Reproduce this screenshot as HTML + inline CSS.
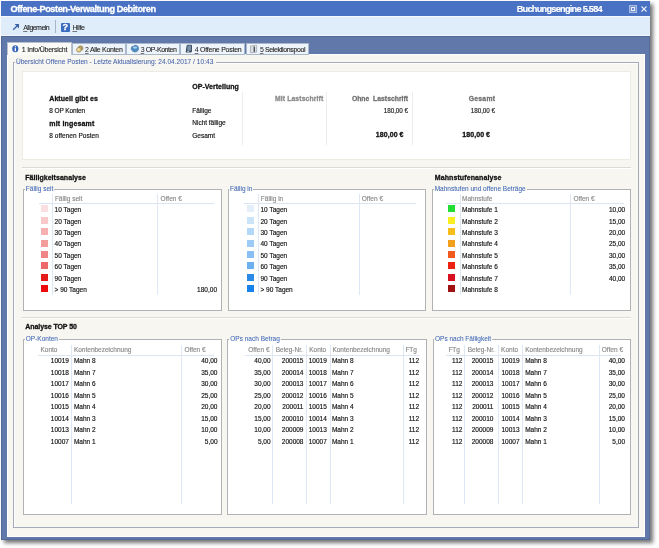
<!DOCTYPE html>
<html><head><meta charset="utf-8"><style>
html,body{margin:0;padding:0;background:#fff;width:659px;height:548px;overflow:hidden;position:relative}
.w{position:absolute;left:0;top:0;width:659px;height:548px;will-change:transform;background:#fff}
.w>div,.w>svg{position:absolute}
.t{position:absolute;white-space:nowrap;font-family:"Liberation Sans",sans-serif;-webkit-text-stroke:0.15px currentColor}
u{text-decoration:underline;text-underline-offset:0.5px;text-decoration-color:#777;-webkit-text-stroke:0}
</style></head><body><div class="w">
<div style="left:1px;top:1px;width:649px;height:539px;background:#6179ab;box-shadow:3px 3px 4px rgba(0,0,0,0.55)"></div>
<div style="left:1px;top:36px;width:649px;height:504px;background:#6079aa;border:1px solid #52699a;box-sizing:border-box"></div>
<div style="left:1px;top:1px;width:649px;height:15px;background:#4a72c4"></div>
<div class="t" style="top:4.199999999999999px;font-size:9.2px;line-height:10px;color:#fff;font-weight:bold;letter-spacing:-0.448px;left:10.5px;-webkit-text-stroke:0.3px currentColor">Offene-Posten-Verwaltung Debitoren</div>
<div class="t" style="top:4.199999999999999px;font-size:9.2px;line-height:10px;color:#fff;font-weight:bold;letter-spacing:-0.736px;right:57px;-webkit-text-stroke:0.3px currentColormargin-right:0.736px;">Buchungsengine 5.584</div>
<div style="left:628.5px;top:4.5px;width:8px;height:8px;border:1px solid #a8bce4;box-sizing:border-box;background:#7896d4"></div>
<div style="left:630.5px;top:6.5px;width:4px;height:4px;border:1px solid #e8eef8;box-sizing:border-box;background:#6a8ed0"></div>
<svg style="position:absolute;left:640.5px;top:6px" width="6" height="6" viewBox="0 0 6 6"><path d="M0.5 0.5L5.5 5.5M5.5 0.5L0.5 5.5" stroke="#e8eefa" stroke-width="1.1"/></svg>
<div style="left:1px;top:16px;width:649px;height:20px;background:#dfecfa;border-top:1px solid #f4f9ff;border-bottom:1px solid #f0f6fd;box-sizing:border-box"></div>
<svg style="position:absolute;left:12px;top:23px" width="8" height="8" viewBox="0 0 8 8"><path d="M1.2 6.8L5.5 2.5" stroke="#3d64a8" stroke-width="1.4" fill="none"/><path d="M2.6 1H7V5.4Z" fill="#3d64a8"/></svg>
<div class="t" style="top:22.6px;font-size:7px;line-height:10px;color:#222;letter-spacing:-0.531px;left:23.2px;-webkit-text-stroke:0.1px currentColor"><u>A</u>llgemein</div>
<div style="left:55px;top:20px;width:1px;height:13px;background:#a8b4c8"></div>
<div style="left:61px;top:22.5px;width:9px;height:9px;background:#3a6cc0;border-radius:1px"></div>
<div class="t" style="top:22.2px;font-size:9px;line-height:10px;color:#fff;font-weight:bold;left:62.6px;-webkit-text-stroke:0.28px currentColor;">?</div>
<div class="t" style="top:22.6px;font-size:7px;line-height:10px;color:#222;letter-spacing:-0.354px;left:72.4px;-webkit-text-stroke:0.1px currentColor"><u>H</u>ilfe</div>
<div style="left:7px;top:54px;width:638px;height:483px;background:#f7f6f1;border:1px solid #fff;box-sizing:border-box"></div>
<div style="left:71.5px;top:43px;width:54.5px;height:12px;background:#eef4fb;border:1px solid #aab8cc;box-sizing:border-box"></div>
<div class="t" style="top:44.6px;font-size:7px;line-height:10px;color:#222;letter-spacing:-0.29px;left:85px;-webkit-text-stroke:0.1px currentColor"><u>2</u> Alle Konten</div>
<div style="left:126px;top:43px;width:54px;height:12px;background:#eef4fb;border:1px solid #aab8cc;box-sizing:border-box"></div>
<div class="t" style="top:44.6px;font-size:7px;line-height:10px;color:#222;letter-spacing:-0.418px;left:140.7px;-webkit-text-stroke:0.1px currentColor"><u>3</u> OP-Konten</div>
<div style="left:180.2px;top:43px;width:65.0px;height:12px;background:#eef4fb;border:1px solid #aab8cc;box-sizing:border-box"></div>
<div class="t" style="top:44.6px;font-size:7px;line-height:10px;color:#222;letter-spacing:-0.242px;left:194.7px;-webkit-text-stroke:0.1px currentColor"><u>4</u> Offene Posten</div>
<div style="left:245.5px;top:43px;width:63.19999999999999px;height:12px;background:#eef4fb;border:1px solid #aab8cc;box-sizing:border-box"></div>
<div class="t" style="top:44.6px;font-size:7px;line-height:10px;color:#222;letter-spacing:-0.386px;left:259.9px;-webkit-text-stroke:0.1px currentColor"><u>5</u> Selektionspool</div>
<div style="left:6.5px;top:42px;width:65px;height:13px;background:#fafaf7;border:1px solid #b8c0cc;border-bottom:none;box-sizing:border-box"></div>
<svg style="position:absolute;left:12px;top:44.6px" width="7" height="8" viewBox="0 0 7 8"><ellipse cx="3.3" cy="3.8" rx="3.1" ry="3.5" fill="#3566b8"/><rect x="2.7" y="3.1" width="1.3" height="3.1" fill="#fff"/><rect x="2.7" y="1.3" width="1.3" height="1.1" fill="#fff"/></svg>
<div class="t" style="top:44.6px;font-size:7px;line-height:10px;color:#222;letter-spacing:-0.229px;left:21.8px;-webkit-text-stroke:0.1px currentColor">1 Info/Übersicht</div>
<svg style="position:absolute;left:75px;top:44px" width="10" height="10" viewBox="0 0 10 10"><circle cx="5.6" cy="4.2" r="2.4" fill="#b8a468" stroke="#8c7c4c" stroke-width="0.6"/><circle cx="3.9" cy="5.8" r="2.4" fill="#dcc47c" stroke="#8c7c4c" stroke-width="0.6"/><circle cx="3.6" cy="5.5" r="1.2" fill="#f0e0a8"/></svg>
<svg style="position:absolute;left:130px;top:44px" width="10" height="10" viewBox="0 0 10 10"><path d="M1.2 4 Q1.5 2 3.5 2.2 Q4.5 0.8 6.5 1.5 Q8.6 2 8.5 4.2 Q8.8 6.8 6.8 7.6 Q4.5 8.6 2.8 7.2 Q0.8 6 1.2 4Z" fill="#4e8cc4" stroke="#386894" stroke-width="0.6"/><ellipse cx="5" cy="3.6" rx="2.2" ry="1.1" fill="#a6d0f0"/></svg>
<svg style="position:absolute;left:184.5px;top:44px" width="8" height="10" viewBox="0 0 8 10"><path d="M1.6 1.6 Q2 0.8 3 0.8 L6.2 0.8 Q7 0.8 7 1.8 L7 7.6 L6 8.6 L1.2 8.6 Q0.6 8.6 0.8 7.6Z" fill="#3a4858"/><path d="M2.4 1.6 L6.1 1.6 L6.1 6.8 L2.2 6.8Z" fill="#7890aa"/><rect x="2.2" y="7.2" width="2" height="0.9" fill="#d8e0e8"/></svg>
<svg style="position:absolute;left:249px;top:44px" width="9" height="10" viewBox="0 0 9 10"><path d="M1.4 2 L7.6 1.2 L7.6 8.2 L1.4 8.8Z" fill="#dcdfe2" stroke="#9aa0a6" stroke-width="0.7"/><path d="M4.6 2.6 L6 2.4 L6 7.8 L4.6 8Z" fill="#4a525a"/><rect x="6.3" y="1.6" width="1" height="1" fill="#fff"/></svg>
<div style="left:13px;top:62px;width:626px;height:1px;background:#a6abbb"></div>
<div style="left:14px;top:63px;width:624px;height:1px;background:#fff"></div>
<div style="left:13px;top:62px;width:1px;height:466px;background:#a6abbb"></div>
<div style="left:14px;top:63px;width:1px;height:464px;background:#fff"></div>
<div style="left:638px;top:62px;width:1px;height:466px;background:#a6abbb"></div>
<div style="left:13px;top:527px;width:626px;height:1px;background:#a6abbb"></div>
<div style="left:14.5px;top:57px;width:201px;height:8px;background:#f7f6f1"></div>
<div class="t" style="top:56.5px;font-size:6.6px;line-height:10px;color:#4664ac;letter-spacing:0.005px;left:15.9px;-webkit-text-stroke:0.05px currentColor">Übersicht Offene Posten - Letzte Aktualisierung: 24.04.2017 / 10:43</div>
<div style="left:22px;top:71px;width:609px;height:89px;background:#fff;border:1px solid #ecebe4;box-sizing:border-box"></div>
<div class="t" style="top:81.6px;font-size:7px;line-height:10px;color:#111;font-weight:bold;letter-spacing:0.017px;left:192.3px;-webkit-text-stroke:0.28px currentColor;">OP-Verteilung</div>
<div class="t" style="top:93.8px;font-size:7px;line-height:10px;color:#111;font-weight:bold;letter-spacing:0.054px;left:49.3px;-webkit-text-stroke:0.28px currentColor;">Aktuell gibt es</div>
<div class="t" style="top:106.0px;font-size:6.5px;line-height:10px;color:#111;letter-spacing:-0.121px;left:49.3px;">8 OP Konten</div>
<div class="t" style="top:118.5px;font-size:7px;line-height:10px;color:#111;font-weight:bold;letter-spacing:0.165px;left:49.3px;-webkit-text-stroke:0.28px currentColor;">mit ingesamt</div>
<div class="t" style="top:130.8px;font-size:6.5px;line-height:10px;color:#111;letter-spacing:0.037px;left:49.3px;">8 offenen Posten</div>
<div class="t" style="top:106.0px;font-size:6.5px;line-height:10px;color:#111;letter-spacing:0.007px;left:192.3px;">Fällige</div>
<div class="t" style="top:117.8px;font-size:6.5px;line-height:10px;color:#111;letter-spacing:-0.017px;left:192.3px;">Nicht fällige</div>
<div class="t" style="top:130.8px;font-size:6.5px;line-height:10px;color:#111;letter-spacing:-0.013px;left:192.3px;">Gesamt</div>
<div style="left:242px;top:92px;width:1px;height:53px;background:#ececec"></div>
<div style="left:326px;top:92px;width:1px;height:53px;background:#ececec"></div>
<div style="left:412px;top:92px;width:1px;height:53px;background:#ececec"></div>
<div class="t" style="top:93.6px;font-size:6.8px;line-height:10px;color:#8a8a8a;font-weight:bold;letter-spacing:0.139px;right:335.7px;margin-right:-0.139px;-webkit-text-stroke:0.28px currentColor;">Mit Lastschrift</div>
<div class="t" style="top:93.6px;font-size:6.8px;line-height:10px;color:#707070;font-weight:bold;letter-spacing:0.012px;right:251px;margin-right:-0.012px;-webkit-text-stroke:0.28px currentColor;">Ohne&nbsp; Lastschrift</div>
<div class="t" style="top:93.6px;font-size:6.8px;line-height:10px;color:#707070;font-weight:bold;letter-spacing:0.273px;right:164px;margin-right:-0.273px;-webkit-text-stroke:0.28px currentColor;">Gesamt</div>
<div class="t" style="top:105.6px;font-size:6.3px;line-height:10px;color:#222;letter-spacing:-0.031px;right:251px;margin-right:0.031px;">180,00 €</div>
<div class="t" style="top:105.6px;font-size:6.3px;line-height:10px;color:#222;letter-spacing:-0.031px;right:164px;margin-right:0.031px;">180,00 €</div>
<div class="t" style="top:130.0px;font-size:7px;line-height:10px;color:#111;font-weight:bold;letter-spacing:0.064px;right:255.5px;margin-right:-0.064px;-webkit-text-stroke:0.28px currentColor;">180,00 €</div>
<div class="t" style="top:130.0px;font-size:7px;line-height:10px;color:#111;font-weight:bold;letter-spacing:0.064px;right:169px;margin-right:-0.064px;-webkit-text-stroke:0.28px currentColor;">180,00 €</div>
<div style="left:22px;top:167px;width:609px;height:1px;background:#dcdad2"></div>
<div style="left:22px;top:168px;width:609px;height:1px;background:#fff"></div>
<div class="t" style="top:172.5px;font-size:7px;line-height:10px;color:#111;font-weight:bold;letter-spacing:0.046px;left:25.2px;-webkit-text-stroke:0.28px currentColor;">Fälligkeitsanalyse</div>
<div class="t" style="top:172.5px;font-size:7px;line-height:10px;color:#111;font-weight:bold;letter-spacing:0.114px;left:434.7px;-webkit-text-stroke:0.28px currentColor;">Mahnstufenanalyse</div>
<div style="left:22px;top:317px;width:609px;height:1px;background:#dcdad2"></div>
<div style="left:22px;top:318px;width:609px;height:1px;background:#fff"></div>
<div class="t" style="top:322.0px;font-size:7px;line-height:10px;color:#111;font-weight:bold;letter-spacing:-0.082px;left:25.3px;-webkit-text-stroke:0.28px currentColor;">Analyse TOP 50</div>
<div style="left:23px;top:189px;width:199px;height:122px;background:#fff;border:1px solid #b0b2b4;box-sizing:border-box"></div>
<div class="t" style="left:24.8px;top:183.5px;line-height:10px;font-size:6.5px;color:#4068b8;-webkit-text-stroke:0.05px currentColor;padding:0 1px;background:linear-gradient(#f7f6f1 0,#f7f6f1 6.5px,transparent 6.5px)">Fällig seit</div>
<div style="left:228px;top:189px;width:198px;height:122px;background:#fff;border:1px solid #b0b2b4;box-sizing:border-box"></div>
<div class="t" style="left:229px;top:183.5px;line-height:10px;font-size:6.5px;color:#4068b8;-webkit-text-stroke:0.05px currentColor;padding:0 1px;background:linear-gradient(#f7f6f1 0,#f7f6f1 6.5px,transparent 6.5px)">Fällig in</div>
<div style="left:432px;top:189px;width:199px;height:122px;background:#fff;border:1px solid #b0b2b4;box-sizing:border-box"></div>
<div class="t" style="left:433.7px;top:183.5px;line-height:10px;font-size:6.5px;color:#4068b8;-webkit-text-stroke:0.05px currentColor;padding:0 1px;background:linear-gradient(#f7f6f1 0,#f7f6f1 6.5px,transparent 6.5px)">Mahnstufen und offene Beträge</div>
<div style="left:40.5px;top:205.29999999999998px;width:7px;height:7px;background:#fbdfe0"></div>
<div style="left:246.5px;top:205.29999999999998px;width:7px;height:7px;background:#e4eefb"></div>
<div style="left:448.3px;top:205.29999999999998px;width:7px;height:7px;background:#22dd33"></div>
<div style="left:40.5px;top:216.7px;width:7px;height:7px;background:#f9c8c9"></div>
<div style="left:246.5px;top:216.7px;width:7px;height:7px;background:#cce4fa"></div>
<div style="left:448.3px;top:216.7px;width:7px;height:7px;background:#f8ee20"></div>
<div style="left:40.5px;top:228.1px;width:7px;height:7px;background:#f6b0b1"></div>
<div style="left:246.5px;top:228.1px;width:7px;height:7px;background:#b4d8fa"></div>
<div style="left:448.3px;top:228.1px;width:7px;height:7px;background:#f5be1a"></div>
<div style="left:40.5px;top:239.5px;width:7px;height:7px;background:#f39c9c"></div>
<div style="left:246.5px;top:239.5px;width:7px;height:7px;background:#9ecbf6"></div>
<div style="left:448.3px;top:239.5px;width:7px;height:7px;background:#f1a01c"></div>
<div style="left:40.5px;top:250.89999999999998px;width:7px;height:7px;background:#f08585"></div>
<div style="left:246.5px;top:250.89999999999998px;width:7px;height:7px;background:#88bff4"></div>
<div style="left:448.3px;top:250.89999999999998px;width:7px;height:7px;background:#f05a1c"></div>
<div style="left:40.5px;top:262.3px;width:7px;height:7px;background:#ec6a6a"></div>
<div style="left:246.5px;top:262.3px;width:7px;height:7px;background:#6cb0f0"></div>
<div style="left:448.3px;top:262.3px;width:7px;height:7px;background:#ee2212"></div>
<div style="left:40.5px;top:273.7px;width:7px;height:7px;background:#e51a1a"></div>
<div style="left:246.5px;top:273.7px;width:7px;height:7px;background:#2a8ae6"></div>
<div style="left:448.3px;top:273.7px;width:7px;height:7px;background:#d80f1f"></div>
<div style="left:40.5px;top:285.09999999999997px;width:7px;height:7px;background:#ee0a0a"></div>
<div style="left:246.5px;top:285.09999999999997px;width:7px;height:7px;background:#1682ec"></div>
<div style="left:448.3px;top:285.09999999999997px;width:7px;height:7px;background:#a01212"></div>
<div style="left:39px;top:203px;width:175px;height:1px;background:#dbe4f4"></div>
<div style="left:52px;top:193.5px;width:1px;height:101.89999999999998px;background:#dfe7f5"></div>
<div class="t" style="top:193.5px;font-size:6.5px;line-height:10px;color:#8a8a8a;left:54.9px;">Fällig seit</div>
<div style="left:157px;top:193.5px;width:1px;height:101.89999999999998px;background:#dfe7f5"></div>
<div class="t" style="top:193.5px;font-size:6.5px;line-height:10px;color:#8a8a8a;left:160.6px;">Offen €</div>
<div class="t" style="top:205.1px;font-size:6.5px;line-height:10px;color:#111;left:54.6px;">10 Tagen</div>
<div class="t" style="top:216.5px;font-size:6.5px;line-height:10px;color:#111;left:54.6px;">20 Tagen</div>
<div class="t" style="top:227.9px;font-size:6.5px;line-height:10px;color:#111;left:54.6px;">30 Tagen</div>
<div class="t" style="top:239.3px;font-size:6.5px;line-height:10px;color:#111;left:54.6px;">40 Tagen</div>
<div class="t" style="top:250.7px;font-size:6.5px;line-height:10px;color:#111;left:54.6px;">50 Tagen</div>
<div class="t" style="top:262.1px;font-size:6.5px;line-height:10px;color:#111;left:54.6px;">60 Tagen</div>
<div class="t" style="top:273.5px;font-size:6.5px;line-height:10px;color:#111;left:54.6px;">90 Tagen</div>
<div class="t" style="top:284.9px;font-size:6.5px;line-height:10px;color:#111;left:54.6px;">&gt; 90 Tagen</div>
<div class="t" style="top:284.9px;font-size:6.5px;line-height:10px;color:#111;right:442px;">180,00</div>
<div style="left:244px;top:203px;width:172px;height:1px;background:#dbe4f4"></div>
<div style="left:258px;top:193.5px;width:1px;height:101.89999999999998px;background:#dfe7f5"></div>
<div class="t" style="top:193.5px;font-size:6.5px;line-height:10px;color:#8a8a8a;left:260.8px;">Fällig in</div>
<div style="left:359px;top:193.5px;width:1px;height:101.89999999999998px;background:#dfe7f5"></div>
<div class="t" style="top:193.5px;font-size:6.5px;line-height:10px;color:#8a8a8a;left:361.8px;">Offen €</div>
<div class="t" style="top:205.1px;font-size:6.5px;line-height:10px;color:#111;left:260.5px;">10 Tagen</div>
<div class="t" style="top:216.5px;font-size:6.5px;line-height:10px;color:#111;left:260.5px;">20 Tagen</div>
<div class="t" style="top:227.9px;font-size:6.5px;line-height:10px;color:#111;left:260.5px;">30 Tagen</div>
<div class="t" style="top:239.3px;font-size:6.5px;line-height:10px;color:#111;left:260.5px;">40 Tagen</div>
<div class="t" style="top:250.7px;font-size:6.5px;line-height:10px;color:#111;left:260.5px;">50 Tagen</div>
<div class="t" style="top:262.1px;font-size:6.5px;line-height:10px;color:#111;left:260.5px;">60 Tagen</div>
<div class="t" style="top:273.5px;font-size:6.5px;line-height:10px;color:#111;left:260.5px;">90 Tagen</div>
<div class="t" style="top:284.9px;font-size:6.5px;line-height:10px;color:#111;left:260.5px;">&gt; 90 Tagen</div>
<div style="left:446px;top:203px;width:178px;height:1px;background:#dbe4f4"></div>
<div style="left:460px;top:193.5px;width:1px;height:101.89999999999998px;background:#dfe7f5"></div>
<div class="t" style="top:193.5px;font-size:6.5px;line-height:10px;color:#8a8a8a;left:462px;">Mahnstufe</div>
<div style="left:570px;top:193.5px;width:1px;height:101.89999999999998px;background:#dfe7f5"></div>
<div class="t" style="top:193.5px;font-size:6.5px;line-height:10px;color:#8a8a8a;left:573.4px;">Offen €</div>
<div class="t" style="top:205.1px;font-size:6.5px;line-height:10px;color:#111;left:462px;">Mahnstufe 1</div>
<div class="t" style="top:205.1px;font-size:6.5px;line-height:10px;color:#111;right:33.799999999999955px;">10,00</div>
<div class="t" style="top:216.5px;font-size:6.5px;line-height:10px;color:#111;left:462px;">Mahnstufe 2</div>
<div class="t" style="top:216.5px;font-size:6.5px;line-height:10px;color:#111;right:33.799999999999955px;">15,00</div>
<div class="t" style="top:227.9px;font-size:6.5px;line-height:10px;color:#111;left:462px;">Mahnstufe 3</div>
<div class="t" style="top:227.9px;font-size:6.5px;line-height:10px;color:#111;right:33.799999999999955px;">20,00</div>
<div class="t" style="top:239.3px;font-size:6.5px;line-height:10px;color:#111;left:462px;">Mahnstufe 4</div>
<div class="t" style="top:239.3px;font-size:6.5px;line-height:10px;color:#111;right:33.799999999999955px;">25,00</div>
<div class="t" style="top:250.7px;font-size:6.5px;line-height:10px;color:#111;left:462px;">Mahnstufe 5</div>
<div class="t" style="top:250.7px;font-size:6.5px;line-height:10px;color:#111;right:33.799999999999955px;">30,00</div>
<div class="t" style="top:262.1px;font-size:6.5px;line-height:10px;color:#111;left:462px;">Mahnstufe 6</div>
<div class="t" style="top:262.1px;font-size:6.5px;line-height:10px;color:#111;right:33.799999999999955px;">35,00</div>
<div class="t" style="top:273.5px;font-size:6.5px;line-height:10px;color:#111;left:462px;">Mahnstufe 7</div>
<div class="t" style="top:273.5px;font-size:6.5px;line-height:10px;color:#111;right:33.799999999999955px;">40,00</div>
<div class="t" style="top:284.9px;font-size:6.5px;line-height:10px;color:#111;left:462px;">Mahnstufe 8</div>
<div style="left:23px;top:339px;width:199px;height:176px;background:#fff;border:1px solid #b0b2b4;box-sizing:border-box"></div>
<div class="t" style="left:24.8px;top:333.5px;line-height:10px;font-size:6.5px;color:#4068b8;-webkit-text-stroke:0.05px currentColor;padding:0 1px;background:linear-gradient(#f7f6f1 0,#f7f6f1 6.5px,transparent 6.5px)">OP-Konten</div>
<div style="left:227px;top:339px;width:200px;height:176px;background:#fff;border:1px solid #b0b2b4;box-sizing:border-box"></div>
<div class="t" style="left:229.3px;top:333.5px;line-height:10px;font-size:6.5px;color:#4068b8;-webkit-text-stroke:0.05px currentColor;padding:0 1px;background:linear-gradient(#f7f6f1 0,#f7f6f1 6.5px,transparent 6.5px)">OPs nach Betrag</div>
<div style="left:433px;top:339px;width:198px;height:176px;background:#fff;border:1px solid #b0b2b4;box-sizing:border-box"></div>
<div class="t" style="left:434px;top:333.5px;line-height:10px;font-size:6.5px;color:#4068b8;-webkit-text-stroke:0.05px currentColor;padding:0 1px;background:linear-gradient(#f7f6f1 0,#f7f6f1 6.5px,transparent 6.5px)">OPs nach Fälligkeit</div>
<div style="left:38px;top:354.8px;width:176px;height:1px;background:#dbe4f4"></div>
<div class="t" style="top:344.6px;font-size:6.5px;line-height:10px;color:#8a8a8a;left:40.5px;">Konto</div>
<div style="left:71.3px;top:344.6px;width:1px;height:159.09999999999997px;background:#dfe7f5"></div>
<div class="t" style="top:344.6px;font-size:6.5px;line-height:10px;color:#8a8a8a;left:73.9px;">Kontenbezeichnung</div>
<div style="left:181px;top:344.6px;width:1px;height:159.09999999999997px;background:#dfe7f5"></div>
<div class="t" style="top:344.6px;font-size:6.5px;line-height:10px;color:#8a8a8a;left:184.4px;">Offen €</div>
<div class="t" style="top:356.4px;font-size:6.5px;line-height:10px;color:#111;right:590.1px;">10019</div>
<div class="t" style="top:356.4px;font-size:6.5px;line-height:10px;color:#111;left:73.9px;">Mahn 8</div>
<div class="t" style="top:356.4px;font-size:6.5px;line-height:10px;color:#111;right:441.5px;">40,00</div>
<div class="t" style="top:367.87px;font-size:6.5px;line-height:10px;color:#111;right:590.1px;">10018</div>
<div class="t" style="top:367.87px;font-size:6.5px;line-height:10px;color:#111;left:73.9px;">Mahn 7</div>
<div class="t" style="top:367.87px;font-size:6.5px;line-height:10px;color:#111;right:441.5px;">35,00</div>
<div class="t" style="top:379.34px;font-size:6.5px;line-height:10px;color:#111;right:590.1px;">10017</div>
<div class="t" style="top:379.34px;font-size:6.5px;line-height:10px;color:#111;left:73.9px;">Mahn 6</div>
<div class="t" style="top:379.34px;font-size:6.5px;line-height:10px;color:#111;right:441.5px;">30,00</div>
<div class="t" style="top:390.81px;font-size:6.5px;line-height:10px;color:#111;right:590.1px;">10016</div>
<div class="t" style="top:390.81px;font-size:6.5px;line-height:10px;color:#111;left:73.9px;">Mahn 5</div>
<div class="t" style="top:390.81px;font-size:6.5px;line-height:10px;color:#111;right:441.5px;">25,00</div>
<div class="t" style="top:402.28px;font-size:6.5px;line-height:10px;color:#111;right:590.1px;">10015</div>
<div class="t" style="top:402.28px;font-size:6.5px;line-height:10px;color:#111;left:73.9px;">Mahn 4</div>
<div class="t" style="top:402.28px;font-size:6.5px;line-height:10px;color:#111;right:441.5px;">20,00</div>
<div class="t" style="top:413.75px;font-size:6.5px;line-height:10px;color:#111;right:590.1px;">10014</div>
<div class="t" style="top:413.75px;font-size:6.5px;line-height:10px;color:#111;left:73.9px;">Mahn 3</div>
<div class="t" style="top:413.75px;font-size:6.5px;line-height:10px;color:#111;right:441.5px;">15,00</div>
<div class="t" style="top:425.21999999999997px;font-size:6.5px;line-height:10px;color:#111;right:590.1px;">10013</div>
<div class="t" style="top:425.21999999999997px;font-size:6.5px;line-height:10px;color:#111;left:73.9px;">Mahn 2</div>
<div class="t" style="top:425.21999999999997px;font-size:6.5px;line-height:10px;color:#111;right:441.5px;">10,00</div>
<div class="t" style="top:436.69px;font-size:6.5px;line-height:10px;color:#111;right:590.1px;">10007</div>
<div class="t" style="top:436.69px;font-size:6.5px;line-height:10px;color:#111;left:73.9px;">Mahn 1</div>
<div class="t" style="top:436.69px;font-size:6.5px;line-height:10px;color:#111;right:441.5px;">5,00</div>
<div style="left:244.5px;top:354.8px;width:175.5px;height:1px;background:#dbe4f4"></div>
<div class="t" style="top:344.6px;font-size:6.5px;line-height:10px;color:#8a8a8a;right:389.5px;">Offen €</div>
<div style="left:272.1px;top:344.6px;width:1px;height:159.09999999999997px;background:#dfe7f5"></div>
<div class="t" style="top:344.6px;font-size:6.5px;line-height:10px;color:#8a8a8a;left:275.7px;">Beleg-Nr.</div>
<div style="left:306.1px;top:344.6px;width:1px;height:159.09999999999997px;background:#dfe7f5"></div>
<div class="t" style="top:344.6px;font-size:6.5px;line-height:10px;color:#8a8a8a;left:309.2px;">Konto</div>
<div style="left:329.9px;top:344.6px;width:1px;height:159.09999999999997px;background:#dfe7f5"></div>
<div class="t" style="top:344.6px;font-size:6.5px;line-height:10px;color:#8a8a8a;left:332.4px;">Kontenbezeichnung</div>
<div style="left:402.9px;top:344.6px;width:1px;height:159.09999999999997px;background:#dfe7f5"></div>
<div class="t" style="top:344.6px;font-size:6.5px;line-height:10px;color:#8a8a8a;left:405.4px;">FTg</div>
<div class="t" style="top:356.4px;font-size:6.5px;line-height:10px;color:#111;right:388.4px;">40,00</div>
<div class="t" style="top:356.4px;font-size:6.5px;line-height:10px;color:#111;right:355.5px;">200015</div>
<div class="t" style="top:356.4px;font-size:6.5px;line-height:10px;color:#111;right:332.2px;">10019</div>
<div class="t" style="top:356.4px;font-size:6.5px;line-height:10px;color:#111;left:331.9px;">Mahn 8</div>
<div class="t" style="top:356.4px;font-size:6.5px;line-height:10px;color:#111;right:239.89999999999998px;">112</div>
<div class="t" style="top:367.87px;font-size:6.5px;line-height:10px;color:#111;right:388.4px;">35,00</div>
<div class="t" style="top:367.87px;font-size:6.5px;line-height:10px;color:#111;right:355.5px;">200014</div>
<div class="t" style="top:367.87px;font-size:6.5px;line-height:10px;color:#111;right:332.2px;">10018</div>
<div class="t" style="top:367.87px;font-size:6.5px;line-height:10px;color:#111;left:331.9px;">Mahn 7</div>
<div class="t" style="top:367.87px;font-size:6.5px;line-height:10px;color:#111;right:239.89999999999998px;">112</div>
<div class="t" style="top:379.34px;font-size:6.5px;line-height:10px;color:#111;right:388.4px;">30,00</div>
<div class="t" style="top:379.34px;font-size:6.5px;line-height:10px;color:#111;right:355.5px;">200013</div>
<div class="t" style="top:379.34px;font-size:6.5px;line-height:10px;color:#111;right:332.2px;">10017</div>
<div class="t" style="top:379.34px;font-size:6.5px;line-height:10px;color:#111;left:331.9px;">Mahn 6</div>
<div class="t" style="top:379.34px;font-size:6.5px;line-height:10px;color:#111;right:239.89999999999998px;">112</div>
<div class="t" style="top:390.81px;font-size:6.5px;line-height:10px;color:#111;right:388.4px;">25,00</div>
<div class="t" style="top:390.81px;font-size:6.5px;line-height:10px;color:#111;right:355.5px;">200012</div>
<div class="t" style="top:390.81px;font-size:6.5px;line-height:10px;color:#111;right:332.2px;">10016</div>
<div class="t" style="top:390.81px;font-size:6.5px;line-height:10px;color:#111;left:331.9px;">Mahn 5</div>
<div class="t" style="top:390.81px;font-size:6.5px;line-height:10px;color:#111;right:239.89999999999998px;">112</div>
<div class="t" style="top:402.28px;font-size:6.5px;line-height:10px;color:#111;right:388.4px;">20,00</div>
<div class="t" style="top:402.28px;font-size:6.5px;line-height:10px;color:#111;right:355.5px;">200011</div>
<div class="t" style="top:402.28px;font-size:6.5px;line-height:10px;color:#111;right:332.2px;">10015</div>
<div class="t" style="top:402.28px;font-size:6.5px;line-height:10px;color:#111;left:331.9px;">Mahn 4</div>
<div class="t" style="top:402.28px;font-size:6.5px;line-height:10px;color:#111;right:239.89999999999998px;">112</div>
<div class="t" style="top:413.75px;font-size:6.5px;line-height:10px;color:#111;right:388.4px;">15,00</div>
<div class="t" style="top:413.75px;font-size:6.5px;line-height:10px;color:#111;right:355.5px;">200010</div>
<div class="t" style="top:413.75px;font-size:6.5px;line-height:10px;color:#111;right:332.2px;">10014</div>
<div class="t" style="top:413.75px;font-size:6.5px;line-height:10px;color:#111;left:331.9px;">Mahn 3</div>
<div class="t" style="top:413.75px;font-size:6.5px;line-height:10px;color:#111;right:239.89999999999998px;">112</div>
<div class="t" style="top:425.21999999999997px;font-size:6.5px;line-height:10px;color:#111;right:388.4px;">10,00</div>
<div class="t" style="top:425.21999999999997px;font-size:6.5px;line-height:10px;color:#111;right:355.5px;">200009</div>
<div class="t" style="top:425.21999999999997px;font-size:6.5px;line-height:10px;color:#111;right:332.2px;">10013</div>
<div class="t" style="top:425.21999999999997px;font-size:6.5px;line-height:10px;color:#111;left:331.9px;">Mahn 2</div>
<div class="t" style="top:425.21999999999997px;font-size:6.5px;line-height:10px;color:#111;right:239.89999999999998px;">112</div>
<div class="t" style="top:436.69px;font-size:6.5px;line-height:10px;color:#111;right:388.4px;">5,00</div>
<div class="t" style="top:436.69px;font-size:6.5px;line-height:10px;color:#111;right:355.5px;">200008</div>
<div class="t" style="top:436.69px;font-size:6.5px;line-height:10px;color:#111;right:332.2px;">10007</div>
<div class="t" style="top:436.69px;font-size:6.5px;line-height:10px;color:#111;left:331.9px;">Mahn 1</div>
<div class="t" style="top:436.69px;font-size:6.5px;line-height:10px;color:#111;right:239.89999999999998px;">112</div>
<div style="left:446px;top:354.6px;width:175.39999999999998px;height:1px;background:#dbe4f4"></div>
<div class="t" style="top:344.6px;font-size:6.5px;line-height:10px;color:#8a8a8a;left:448.4px;">FTg</div>
<div style="left:464.4px;top:344.6px;width:1px;height:159.09999999999997px;background:#dfe7f5"></div>
<div class="t" style="top:344.6px;font-size:6.5px;line-height:10px;color:#8a8a8a;left:467.7px;">Beleg-Nr.</div>
<div style="left:498.4px;top:344.6px;width:1px;height:159.09999999999997px;background:#dfe7f5"></div>
<div class="t" style="top:344.6px;font-size:6.5px;line-height:10px;color:#8a8a8a;left:501.1px;">Konto</div>
<div style="left:521.8px;top:344.6px;width:1px;height:159.09999999999997px;background:#dfe7f5"></div>
<div class="t" style="top:344.6px;font-size:6.5px;line-height:10px;color:#8a8a8a;left:525.2px;">Kontenbezeichnung</div>
<div style="left:599.1px;top:344.6px;width:1px;height:159.09999999999997px;background:#dfe7f5"></div>
<div class="t" style="top:344.6px;font-size:6.5px;line-height:10px;color:#8a8a8a;left:601.8px;">Offen €</div>
<div class="t" style="top:356.4px;font-size:6.5px;line-height:10px;color:#111;right:196.60000000000002px;">112</div>
<div class="t" style="top:356.4px;font-size:6.5px;line-height:10px;color:#111;right:165.60000000000002px;">200015</div>
<div class="t" style="top:356.4px;font-size:6.5px;line-height:10px;color:#111;right:139.5px;">10019</div>
<div class="t" style="top:356.4px;font-size:6.5px;line-height:10px;color:#111;left:525.2px;">Mahn 8</div>
<div class="t" style="top:356.4px;font-size:6.5px;line-height:10px;color:#111;right:34px;">40,00</div>
<div class="t" style="top:367.87px;font-size:6.5px;line-height:10px;color:#111;right:196.60000000000002px;">112</div>
<div class="t" style="top:367.87px;font-size:6.5px;line-height:10px;color:#111;right:165.60000000000002px;">200014</div>
<div class="t" style="top:367.87px;font-size:6.5px;line-height:10px;color:#111;right:139.5px;">10018</div>
<div class="t" style="top:367.87px;font-size:6.5px;line-height:10px;color:#111;left:525.2px;">Mahn 7</div>
<div class="t" style="top:367.87px;font-size:6.5px;line-height:10px;color:#111;right:34px;">35,00</div>
<div class="t" style="top:379.34px;font-size:6.5px;line-height:10px;color:#111;right:196.60000000000002px;">112</div>
<div class="t" style="top:379.34px;font-size:6.5px;line-height:10px;color:#111;right:165.60000000000002px;">200013</div>
<div class="t" style="top:379.34px;font-size:6.5px;line-height:10px;color:#111;right:139.5px;">10017</div>
<div class="t" style="top:379.34px;font-size:6.5px;line-height:10px;color:#111;left:525.2px;">Mahn 6</div>
<div class="t" style="top:379.34px;font-size:6.5px;line-height:10px;color:#111;right:34px;">30,00</div>
<div class="t" style="top:390.81px;font-size:6.5px;line-height:10px;color:#111;right:196.60000000000002px;">112</div>
<div class="t" style="top:390.81px;font-size:6.5px;line-height:10px;color:#111;right:165.60000000000002px;">200012</div>
<div class="t" style="top:390.81px;font-size:6.5px;line-height:10px;color:#111;right:139.5px;">10016</div>
<div class="t" style="top:390.81px;font-size:6.5px;line-height:10px;color:#111;left:525.2px;">Mahn 5</div>
<div class="t" style="top:390.81px;font-size:6.5px;line-height:10px;color:#111;right:34px;">25,00</div>
<div class="t" style="top:402.28px;font-size:6.5px;line-height:10px;color:#111;right:196.60000000000002px;">112</div>
<div class="t" style="top:402.28px;font-size:6.5px;line-height:10px;color:#111;right:165.60000000000002px;">200011</div>
<div class="t" style="top:402.28px;font-size:6.5px;line-height:10px;color:#111;right:139.5px;">10015</div>
<div class="t" style="top:402.28px;font-size:6.5px;line-height:10px;color:#111;left:525.2px;">Mahn 4</div>
<div class="t" style="top:402.28px;font-size:6.5px;line-height:10px;color:#111;right:34px;">20,00</div>
<div class="t" style="top:413.75px;font-size:6.5px;line-height:10px;color:#111;right:196.60000000000002px;">112</div>
<div class="t" style="top:413.75px;font-size:6.5px;line-height:10px;color:#111;right:165.60000000000002px;">200010</div>
<div class="t" style="top:413.75px;font-size:6.5px;line-height:10px;color:#111;right:139.5px;">10014</div>
<div class="t" style="top:413.75px;font-size:6.5px;line-height:10px;color:#111;left:525.2px;">Mahn 3</div>
<div class="t" style="top:413.75px;font-size:6.5px;line-height:10px;color:#111;right:34px;">15,00</div>
<div class="t" style="top:425.21999999999997px;font-size:6.5px;line-height:10px;color:#111;right:196.60000000000002px;">112</div>
<div class="t" style="top:425.21999999999997px;font-size:6.5px;line-height:10px;color:#111;right:165.60000000000002px;">200009</div>
<div class="t" style="top:425.21999999999997px;font-size:6.5px;line-height:10px;color:#111;right:139.5px;">10013</div>
<div class="t" style="top:425.21999999999997px;font-size:6.5px;line-height:10px;color:#111;left:525.2px;">Mahn 2</div>
<div class="t" style="top:425.21999999999997px;font-size:6.5px;line-height:10px;color:#111;right:34px;">10,00</div>
<div class="t" style="top:436.69px;font-size:6.5px;line-height:10px;color:#111;right:196.60000000000002px;">112</div>
<div class="t" style="top:436.69px;font-size:6.5px;line-height:10px;color:#111;right:165.60000000000002px;">200008</div>
<div class="t" style="top:436.69px;font-size:6.5px;line-height:10px;color:#111;right:139.5px;">10007</div>
<div class="t" style="top:436.69px;font-size:6.5px;line-height:10px;color:#111;left:525.2px;">Mahn 1</div>
<div class="t" style="top:436.69px;font-size:6.5px;line-height:10px;color:#111;right:34px;">5,00</div>
</div></body></html>
